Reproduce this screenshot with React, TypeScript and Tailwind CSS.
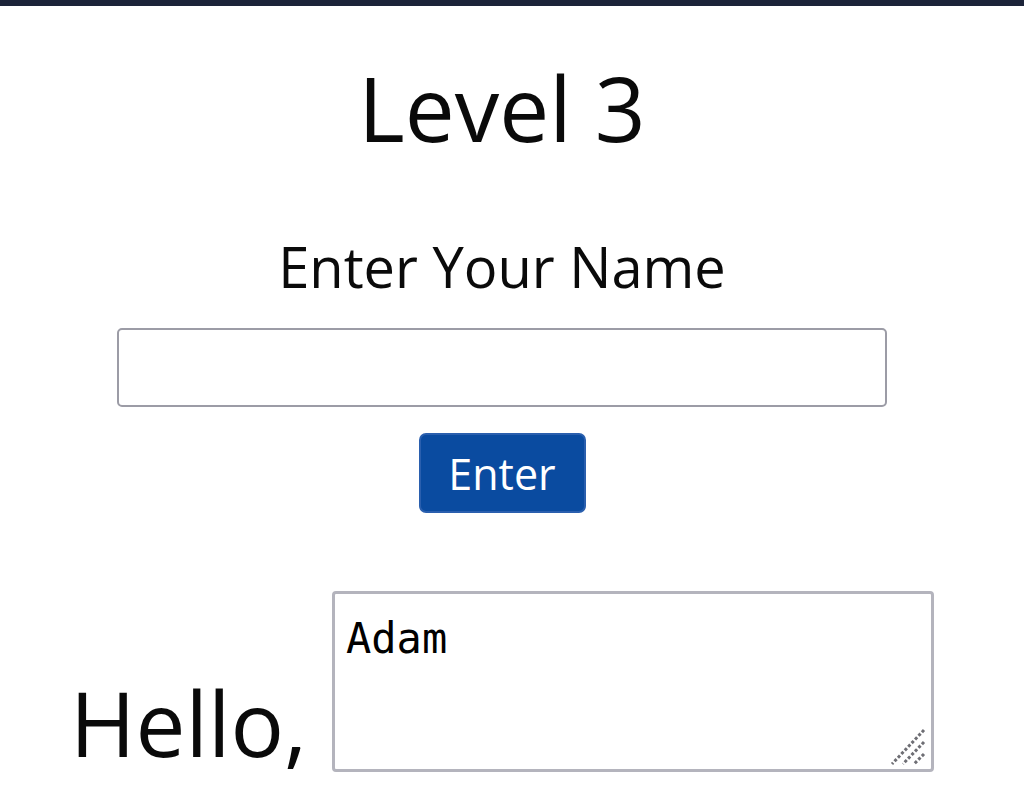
import { useState } from "react";

export default function App() {
  const [name, setName] = useState("");
  const [greeting, setGreeting] = useState("Adam");

  return (
    <div className="min-h-screen bg-white text-[#0a0a0a]" style={{ fontFamily: '"Open Sans", "Noto Sans", sans-serif' }}>
      <div className="h-[6px] bg-[#1c2339]" />
      <div className="flex flex-col items-center pr-[20px]">
        <h1 className="mt-[57px] text-[89px] leading-none font-medium">Level 3</h1>
        <h2 className="mt-[86px] text-[56px] leading-none font-medium">Enter Your Name</h2>
        <input
          value={name}
          onChange={(e) => setName(e.target.value)}
          className="mt-[34px] h-[79px] w-[770px] rounded-[5px] border-2 border-[#9c9ca6] bg-white px-3 text-[40px] outline-none"
        />
        <button
          onClick={() => name && setGreeting(name)}
          className="mt-[26px] h-[80px] w-[167px] rounded-[7px] border-2 border-[#2a5fae] bg-[#0a4ba0] text-[43px] leading-none font-medium text-white"
        >
          Enter
        </button>
        <div className="mt-[78px] flex items-end gap-[25px]">
          <span className="pb-[5px] text-[89px] leading-none font-medium">Hello,</span>
          <div className="relative">
            <textarea
              value={greeting}
              onChange={(e) => setGreeting(e.target.value)}
              className="block h-[181px] w-[602px] resize-none rounded-[4px] border-[3px] border-[#b4b4bd] bg-white pl-[11px] pt-[24px] text-[42px] leading-none text-black outline-none"
              style={{ fontFamily: '"DejaVu Sans Mono", monospace' }}
            />
            <svg className="pointer-events-none absolute bottom-[6px] right-[8px]" width="36" height="38" viewBox="0 0 36 38">
              <g stroke="#6e6e74" strokeWidth="3" strokeDasharray="3 2">
                <line x1="34" y1="2" x2="2" y2="36" />
                <line x1="34" y1="14" x2="13" y2="36" />
                <line x1="34" y1="26" x2="24" y2="36" />
              </g>
            </svg>
          </div>
        </div>
      </div>
    </div>
  );
}
